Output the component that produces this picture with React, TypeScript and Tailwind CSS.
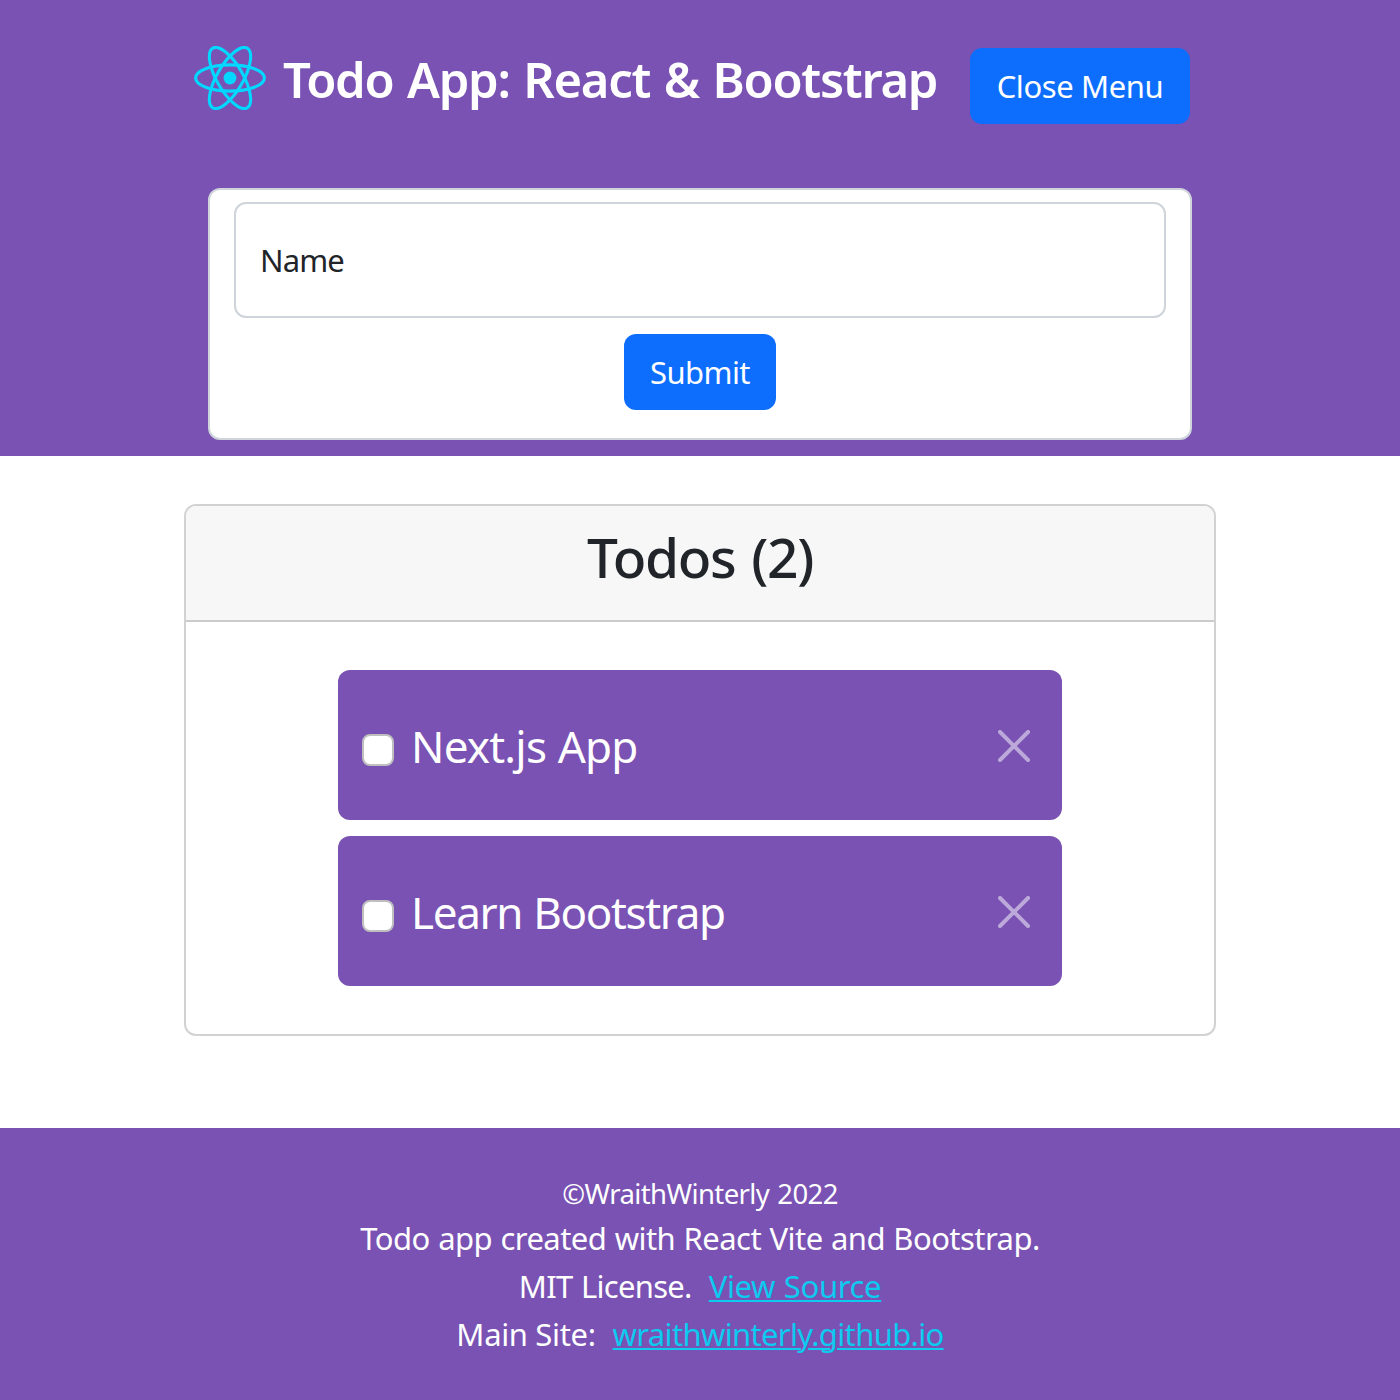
import { useState } from "react";

type Todo = { id: number; title: string; tracking: string; done: boolean };

const initialTodos: Todo[] = [
  { id: 1, title: "Next.js App", tracking: "tracking-[-0.8px]", done: false },
  { id: 2, title: "Learn Bootstrap", tracking: "tracking-[-1.35px]", done: false },
];

function ReactLogo() {
  return (
    <svg viewBox="-11.5 -10.23174 23 20.46348" className="h-16 w-[72px] shrink-0" aria-hidden="true">
      <circle r="2.05" fill="#00d8ff" />
      <g fill="none" stroke="#00d8ff">
        <ellipse rx="11" ry="4.2" />
        <ellipse rx="11" ry="4.2" transform="rotate(60)" />
        <ellipse rx="11" ry="4.2" transform="rotate(120)" />
      </g>
    </svg>
  );
}

function CloseIcon() {
  return (
    <svg viewBox="0 0 16 16" className="size-8" fill="#fff" aria-hidden="true">
      <path d="M.293.293a1 1 0 0 1 1.414 0L8 6.586 14.293.293a1 1 0 1 1 1.414 1.414L9.414 8l6.293 6.293a1 1 0 0 1-1.414 1.414L8 9.414l-6.293 6.293a1 1 0 0 1-1.414-1.414L6.586 8 .293 1.707a1 1 0 0 1 0-1.414z" />
    </svg>
  );
}

export default function App() {
  const [todos, setTodos] = useState(initialTodos);

  const toggle = (id: number) =>
    setTodos(todos.map((t) => (t.id === id ? { ...t, done: !t.done } : t)));
  const remove = (id: number) => setTodos(todos.filter((t) => t.id !== id));

  return (
    <div className="flex h-[1400px] flex-col bg-white font-['Noto_Sans',sans-serif] text-[31px] leading-[48px] text-[#212529]">
      <header className="h-[456px] shrink-0 bg-[#7952b3]">
        <div className="flex h-[188px] items-start pl-[194px]">
          <div className="flex w-[776px] items-start pt-[46px]">
            <ReactLogo />
            <h1 className="ml-[17px] text-[49px] leading-[66px] font-semibold tracking-[-1.3px] [word-spacing:2.2px] whitespace-nowrap text-white">
              Todo App: React &amp; Bootstrap
            </h1>
          </div>
          <button className="mt-12 h-[76px] w-[220px] rounded-xl bg-[#0d6efd] tracking-[-0.4px] text-white">
            Close Menu
          </button>
        </div>
        <form
          className="mx-[208px] flex h-[252px] flex-col items-center rounded-xl border-2 border-[#ced4da] bg-white px-6 pt-3"
          onSubmit={(e) => e.preventDefault()}
        >
          <input
            type="text"
            placeholder="Name"
            className="h-[116px] w-full shrink-0 rounded-xl border-2 border-[#ced4da] bg-white px-6 tracking-[-0.9px] outline-none placeholder:text-[#212529]"
          />
          <button className="mt-4 h-[76px] w-[152px] shrink-0 rounded-xl bg-[#0d6efd] tracking-[-0.6px] text-white">
            Submit
          </button>
        </form>
      </header>

      <main className="flex-1 px-[184px] pt-12">
        <section className="h-[532px] rounded-xl border-2 border-[#d2d2d2] bg-white">
          <div className="h-[116px] rounded-t-[10px] border-b-2 border-[#cbcbcb] bg-[#f7f7f7] pt-4 text-center">
            <h2 className="text-[55px] leading-[70px] font-medium tracking-[-1.35px] [word-spacing:3px]">
              Todos ({todos.length})
            </h2>
          </div>
          <ul className="mx-[152px] mt-12 flex flex-col gap-4">
            {todos.map((todo) => (
              <li key={todo.id} className="flex h-[150px] items-center rounded-xl bg-[#7952b3] px-6 text-white">
                <input
                  type="checkbox"
                  checked={todo.done}
                  onChange={() => toggle(todo.id)}
                  aria-label={todo.title}
                  className="mt-[10px] size-8 appearance-none rounded-lg border-2 border-[#bfbfbf] bg-white checked:bg-[#0d6efd]"
                />
                <span className={`mt-px ml-[17px] flex-1 text-[44px] leading-[66px] [word-spacing:1px] ${todo.tracking}`}>
                  {todo.title}
                </span>
                <button className="mt-[2px] mr-2 opacity-50" aria-label="Remove" onClick={() => remove(todo.id)}>
                  <CloseIcon />
                </button>
              </li>
            ))}
          </ul>
        </section>
      </main>

      <footer className="h-[272px] shrink-0 bg-[#7952b3] pt-[45px] text-center text-white">
        <p className="text-[27.5px] leading-[41px] tracking-[-0.6px] [word-spacing:1.5px]">©WraithWinterly 2022</p>
        <p className="tracking-[-0.55px] [word-spacing:0.9px]">Todo app created with React Vite and Bootstrap.</p>
        <p className="flex justify-center gap-[17px]">
          <span className="tracking-[-0.7px] [word-spacing:1px]">MIT License.</span>
          <a
            className="tracking-[-0.35px] [word-spacing:1px] text-[#0dcaf0] underline decoration-2 underline-offset-2"
            href="#source"
          >
            View Source
          </a>
        </p>
        <p className="flex justify-center gap-[17px]">
          <span className="tracking-[-0.35px]">Main Site:</span>
          <a
            className="tracking-[-0.66px] text-[#0dcaf0] underline decoration-2 underline-offset-2"
            href="#site"
          >
            wraithwinterly.github.io
          </a>
        </p>
      </footer>
    </div>
  );
}
